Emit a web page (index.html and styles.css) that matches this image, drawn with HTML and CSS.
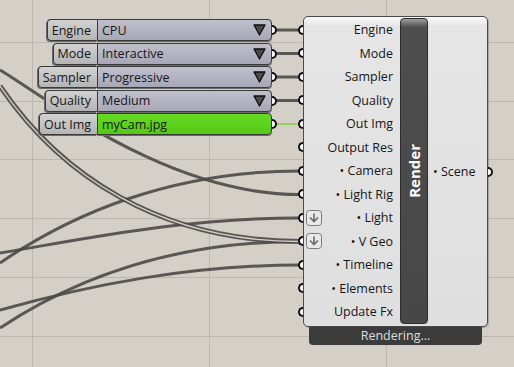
FILE: index.html
```html
<!DOCTYPE html>
<html lang="en">
<head>
  <meta charset="UTF-8" />
  <title>Render Component</title>
  <link rel="stylesheet" href="styles.css">
</head>
<body>
  <div class="canvas">
    <svg class="wires" width="514" height="367" viewBox="0 0 514 367">
      <g class="grid">
        <line x1="32.5" y1="0" x2="32.5" y2="367" />
        <line x1="209.5" y1="0" x2="209.5" y2="367" />
        <line x1="386.5" y1="0" x2="386.5" y2="367" />
        <line x1="0" y1="42.5" x2="514" y2="42.5" />
        <line x1="0" y1="101.5" x2="514" y2="101.5" />
        <line x1="0" y1="159.5" x2="514" y2="159.5" />
        <line x1="0" y1="218.5" x2="514" y2="218.5" />
        <line x1="0" y1="277.5" x2="514" y2="277.5" />
        <line x1="0" y1="336.5" x2="514" y2="336.5" />
      </g>
      <!-- wires coming in from the left -->
      <path class="wire" d="M0 70 C50 100, 170 195, 300 194.5" />
      <path class="wire" d="M0 263 C70 215, 170 171, 300 171" />
      <path class="wire" d="M0 253 C80 240, 180 218, 300 218" />
      <path class="wire" d="M0 310 C90 285, 190 265, 300 265" />
      <path class="wire" d="M0 328 C80 275, 180 241.5, 300 241.5" />
      <path class="wire-tree" d="M0 86 C60 175, 160 241.5, 300 241.5" />
      <path class="wire-tree-core" d="M0 86 C60 175, 160 241.5, 300 241.5" />
      <!-- param to input wires -->
      <path class="wire short" d="M276 30 H300" />
      <path class="wire short" d="M276 53.5 H300" />
      <path class="wire short" d="M276 77 H300" />
      <path class="wire short" d="M276 100.5 H300" />
      <path class="wire-green" d="M276 124 H300" />
    </svg>

    <div class="params">
      <div class="param">
        <span class="p-name">Engine</span>
        <span class="p-value">CPU<svg class="drop" width="13" height="12"><polygon points="1,1 12,1 6.5,11" /></svg></span>
        <span class="nub-out"></span>
      </div>
      <div class="param">
        <span class="p-name">Mode</span>
        <span class="p-value">Interactive<svg class="drop" width="13" height="12"><polygon points="1,1 12,1 6.5,11" /></svg></span>
        <span class="nub-out"></span>
      </div>
      <div class="param">
        <span class="p-name">Sampler</span>
        <span class="p-value">Progressive<svg class="drop" width="13" height="12"><polygon points="1,1 12,1 6.5,11" /></svg></span>
        <span class="nub-out"></span>
      </div>
      <div class="param">
        <span class="p-name">Quality</span>
        <span class="p-value">Medium<svg class="drop" width="13" height="12"><polygon points="1,1 12,1 6.5,11" /></svg></span>
        <span class="nub-out"></span>
      </div>
      <div class="param">
        <span class="p-name">Out Img</span>
        <span class="p-value green">myCam.jpg</span>
        <span class="nub-out"></span>
      </div>
    </div>

    <div class="comp">
      <div class="comp-body">
        <div class="inputs">
          <div class="in"><span class="nub-in"></span><span class="in-label">Engine</span></div>
          <div class="in"><span class="nub-in"></span><span class="in-label">Mode</span></div>
          <div class="in"><span class="nub-in"></span><span class="in-label">Sampler</span></div>
          <div class="in"><span class="nub-in"></span><span class="in-label">Quality</span></div>
          <div class="in"><span class="nub-in"></span><span class="in-label">Out Img</span></div>
          <div class="in"><span class="nub-in"></span><span class="in-label">Output Res</span></div>
          <div class="in"><span class="nub-in"></span><span class="in-label">• Camera</span></div>
          <div class="in"><span class="nub-in"></span><span class="in-label">• Light Rig</span></div>
          <div class="in">
            <span class="nub-in"></span>
            <svg class="graft" width="16" height="16"><rect x="0.5" y="0.5" width="15" height="15" rx="3" /><path d="M8 3.5 V11.5 M4 7.5 L8 11.5 L12 7.5" /></svg>
            <span class="in-label">• Light</span>
          </div>
          <div class="in">
            <span class="nub-in"></span>
            <svg class="graft" width="16" height="16"><rect x="0.5" y="0.5" width="15" height="15" rx="3" /><path d="M8 3.5 V11.5 M4 7.5 L8 11.5 L12 7.5" /></svg>
            <span class="in-label">• V Geo</span>
          </div>
          <div class="in"><span class="nub-in"></span><span class="in-label">• Timeline</span></div>
          <div class="in"><span class="nub-in"></span><span class="in-label">• Elements</span></div>
          <div class="in"><span class="nub-in"></span><span class="in-label">Update Fx</span></div>
        </div>
        <div class="bar"><span>Render</span></div>
        <div class="outputs">
          <div class="out"><span>• Scene</span><span class="nub-right"></span></div>
        </div>
      </div>
      <div class="status">Rendering...</div>
    </div>
  </div>
</body>
</html>
```

FILE: styles.css
```css
* {
  box-sizing: border-box;
}
body {
  margin: 0;
  background: #d4d0c8;
  font-family: "Open Sans", "Noto Sans", sans-serif;
  font-size: 12.5px;
  color: #161616;
}
.canvas {
  position: relative;
  width: 514px;
  height: 367px;
  overflow: hidden;
}
.wires {
  position: absolute;
  left: 0;
  top: 0;
}
.grid line {
  stroke: #bcb8b0;
  stroke-width: 1;
}
.wire {
  fill: none;
  stroke: #4b4945;
  stroke-width: 3;
  opacity: 0.9;
}
.wire-tree {
  fill: none;
  stroke: #4b4945;
  stroke-width: 5;
  opacity: 0.9;
}
.wire-tree-core {
  fill: none;
  stroke: #d4d0c8;
  stroke-width: 1.3;
}
.wire-green {
  fill: none;
  stroke: #8fd25e;
  stroke-width: 2;
}

/* value list params */
.params {
  position: absolute;
  left: 20px;
  top: 19px;
  width: 257px;
  display: flex;
  flex-direction: column;
  gap: 1.5px;
}
.param {
  display: flex;
  justify-content: flex-end;
  align-items: center;
  height: 22px;
}
.p-name {
  height: 100%;
  display: flex;
  align-items: center;
  padding: 0 6px 0 4px;
  background: linear-gradient(#d2d2d2, #b4b4b4);
  border: 1px solid #3a3a3a;
  border-right: none;
  border-radius: 4px 0 0 4px;
  box-shadow: -1px 1px 0 #6a6a6a;
}
.p-value {
  width: 175px;
  height: 100%;
  display: flex;
  align-items: center;
  justify-content: space-between;
  padding: 0 5px 0 4px;
  background: linear-gradient(#c0bfcc, #a8a7b7);
  border: 1px solid #3a3a3a;
  border-radius: 0 4px 4px 0;
  box-shadow: 0 1px 0 #6a6a6a;
}
.p-value.green {
  background: linear-gradient(#66da22, #56c918);
}
.drop polygon {
  fill: #4a4a4a;
  stroke: #0e0e0e;
  stroke-width: 1.3;
  stroke-linejoin: round;
}
.nub-out {
  width: 5px;
  height: 10px;
  border: 2px solid #111;
  border-left: none;
  border-radius: 0 5px 5px 0;
  background: #fff;
}

/* render component */
.comp {
  position: absolute;
  left: 303px;
  top: 16px;
  width: 185px;
}
.comp-body {
  height: 311px;
  display: flex;
  border: 1px solid #4a4a4a;
  border-radius: 5px;
  background: linear-gradient(#fafafa 0, #e5e5e5 9px, #dfdfdf 100%);
  box-shadow: 1px 1px 0 rgba(0, 0, 0, 0.2);
}
.inputs {
  width: 96px;
  display: flex;
  flex-direction: column;
  padding-top: 1px;
}
.in {
  height: 23.5px;
  display: flex;
  align-items: center;
}
.nub-in {
  width: 5px;
  height: 10px;
  margin-left: -6px;
  border: 2px solid #111;
  border-right: none;
  border-radius: 5px 0 0 5px;
  background: #fff;
  flex-shrink: 0;
}
.graft {
  margin-left: 3px;
  flex-shrink: 0;
}
.graft rect {
  fill: #e9e9e9;
  stroke: #7a7a7a;
}
.graft path {
  fill: none;
  stroke: #6a6a6a;
  stroke-width: 1.6;
}
.in-label {
  margin-left: auto;
  padding-right: 7px;
  white-space: nowrap;
}
.bar {
  width: 28px;
  margin: 1px 0 2px;
  background: linear-gradient(#a0a0a0, #4e4e4e 8px, #474747);
  border: 1px solid #2c2c2c;
  border-radius: 4px;
  display: flex;
  align-items: center;
  justify-content: center;
}
.bar span {
  writing-mode: vertical-rl;
  transform: rotate(180deg);
  color: #fff;
  font-weight: 700;
  font-size: 15px;
}
.outputs {
  flex: 1;
  display: flex;
  align-items: center;
}
.out {
  width: 100%;
  display: flex;
  align-items: center;
  padding-left: 5px;
}
.nub-right {
  width: 5px;
  height: 10px;
  margin-left: auto;
  margin-right: -6px;
  border: 2px solid #111;
  border-left: none;
  border-radius: 0 5px 5px 0;
  background: #fff;
}
.status {
  margin: 0 6px;
  height: 18px;
  line-height: 18px;
  background: #3b3b3b;
  color: #dedede;
  text-align: center;
  border-radius: 0 0 4px 4px;
}
```
